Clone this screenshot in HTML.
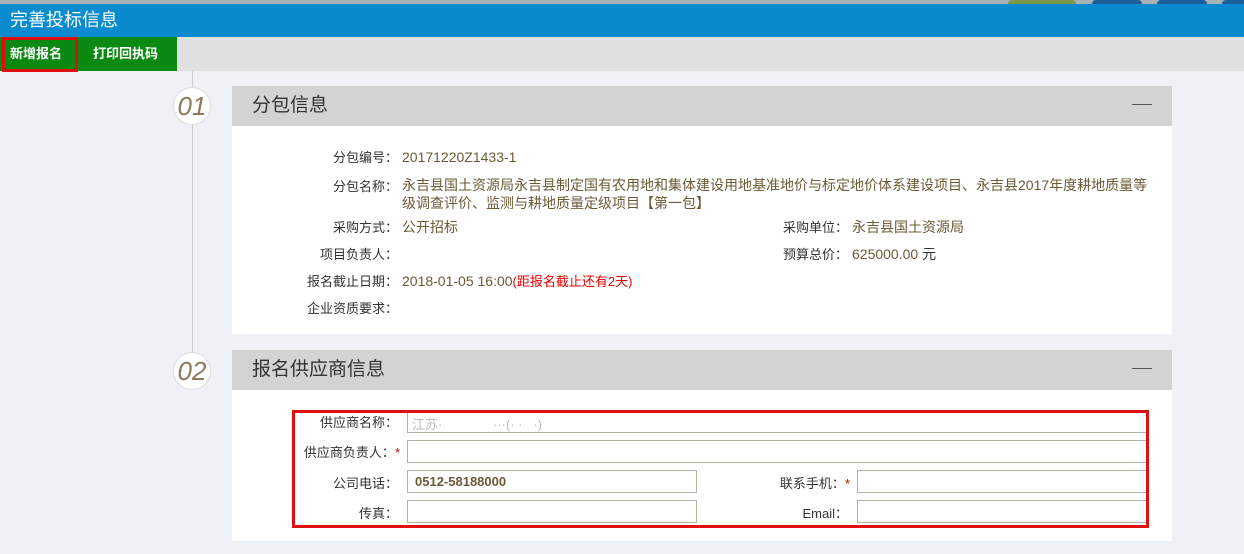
<!DOCTYPE html>
<html><head><meta charset="utf-8"><style>
*{margin:0;padding:0;box-sizing:border-box}
body{width:1244px;height:554px;overflow:hidden;background:#eef1f5;font-family:"Liberation Sans","Noto Sans CJK SC",sans-serif;font-size:13px;color:#333;position:relative}
.a{position:absolute}
.lab{position:absolute;text-align:right;width:130px;font-size:13px;color:#333;line-height:16px;margin-left:7px;margin-top:2px}
.val{position:absolute;color:#6b5a35;font-size:14px;line-height:16px}
.inp{position:absolute;border:1px solid #b5b0a3;background:#fff;height:23px}
.circ{position:absolute;width:38px;height:38px;border-radius:50%;background:#fff;border:1px solid #ddd;font-style:italic;font-size:26px;color:#8a7a58;text-align:center;line-height:36px;font-family:"Liberation Sans",sans-serif}
.hd{position:absolute;left:232px;width:940px;height:40px;background:#d3d3d3;font-size:19px;color:#333;padding-left:20px;line-height:40px}
.hd i{position:absolute;right:20px;top:18px;width:20px;height:1px;background:#555}
.bd{position:absolute;left:232px;width:940px;background:#fff}
.star{color:#c00}
</style></head><body>
<div class="a" style="left:0;top:0;width:1244px;height:4px;background:#a8b0b8"></div>
<div class="a" style="left:1008px;top:0;width:68px;height:4px;background:#7a9a4a;border-radius:6px 6px 0 0"></div>
<div class="a" style="left:1092px;top:0;width:50px;height:4px;background:#1b5f9a;border-radius:6px 6px 0 0"></div>
<div class="a" style="left:1157px;top:0;width:50px;height:4px;background:#1b5f9a;border-radius:6px 6px 0 0"></div>
<div class="a" style="left:1222px;top:0;width:22px;height:4px;background:#1b5f9a;border-radius:6px 0 0 0"></div>
<div class="a" style="left:0;top:4px;width:1244px;height:33px;background:#0a8bd0;color:#fff;font-size:18px;line-height:33px;padding-left:10px">完善投标信息</div>
<div class="a" style="left:0;top:37px;width:1244px;height:34px;background:#e0e0e0"></div>
<div class="a" style="left:0;top:37px;width:177px;height:34px;background:#0a8a12"></div>
<div class="a" style="left:2px;top:37px;width:76px;height:35px;border:3px solid #e01010"></div>
<div class="a" style="left:10px;top:37px;line-height:34px;color:#fff;font-weight:bold;font-size:13px">新增报名</div>
<div class="a" style="left:93px;top:37px;line-height:34px;color:#fff;font-weight:bold;font-size:13px">打印回执码</div>
<div class="a" style="left:192px;top:71px;width:1px;height:300px;background:#ccc"></div>
<div class="circ" style="left:173px;top:87px">01</div>
<div class="circ" style="left:173px;top:352px">02</div>

<div class="hd" style="top:86px">分包信息<i></i></div>
<div class="bd" style="top:126px;height:208px"></div>
<div class="lab" style="left:261px;top:148px">分包编号：</div><div class="val" style="left:402px;top:149px">20171220Z1433-1</div>
<div class="lab" style="left:261px;top:177px">分包名称：</div><div class="val" style="left:402px;top:176px;width:752px;line-height:18px">永吉县国土资源局永吉县制定国有农用地和集体建设用地基准地价与标定地价体系建设项目、永吉县2017年度耕地质量等级调查评价、监测与耕地质量定级项目【第一包】</div>
<div class="lab" style="left:261px;top:218px">采购方式：</div><div class="val" style="left:402px;top:219px">公开招标</div>
<div class="lab" style="left:711px;top:218px">采购单位：</div><div class="val" style="left:852px;top:219px">永吉县国土资源局</div>
<div class="lab" style="left:261px;top:245px">项目负责人：</div>
<div class="lab" style="left:711px;top:245px">预算总价：</div><div class="val" style="left:852px;top:246px">625000.00 <span style="color:#333">元</span></div>
<div class="lab" style="left:261px;top:272px">报名截止日期：</div><div class="val" style="left:402px;top:273px">2018-01-05 16:00<span style="color:#e00;font-size:13px">(距报名截止还有2天)</span></div>
<div class="lab" style="left:261px;top:299px">企业资质要求：</div>

<div class="hd" style="top:350px">报名供应商信息<i></i></div>
<div class="bd" style="top:390px;height:151px"></div>
<div class="inp" style="left:407px;top:410px;width:740px;border-top:none"></div>
<div class="a" style="left:412px;top:414px;color:#bbb;font-size:13px">江苏·&nbsp;&nbsp;&nbsp;&nbsp;&nbsp;&nbsp;&nbsp;&nbsp;&nbsp;&nbsp;&nbsp;&nbsp;&nbsp;&nbsp;···(· ·&nbsp;&nbsp;&nbsp;·)</div>
<div class="inp" style="left:407px;top:440px;width:740px"></div>
<div class="inp" style="left:407px;top:470px;width:290px"></div>
<div class="inp" style="left:407px;top:500px;width:290px"></div>
<div class="inp" style="left:857px;top:470px;width:290px"></div>
<div class="inp" style="left:857px;top:500px;width:290px"></div>
<div class="a" style="left:415px;top:474px;font-weight:bold;color:#6b5a35;font-size:13px">0512-58188000</div>
<div class="lab" style="left:261px;top:413px">供应商名称：</div>
<div class="lab" style="left:263px;top:443px">供应商负责人：<span class="star">*</span></div>
<div class="lab" style="left:261px;top:474px">公司电话：</div>
<div class="lab" style="left:261px;top:504px">传真：</div>
<div class="lab" style="left:713px;top:474px">联系手机：<span class="star">*</span></div>
<div class="lab" style="left:711px;top:504px">Email：</div>
<div class="a" style="left:292px;top:410px;width:857px;height:118px;border:3px solid #e01010"></div>
</body></html>
